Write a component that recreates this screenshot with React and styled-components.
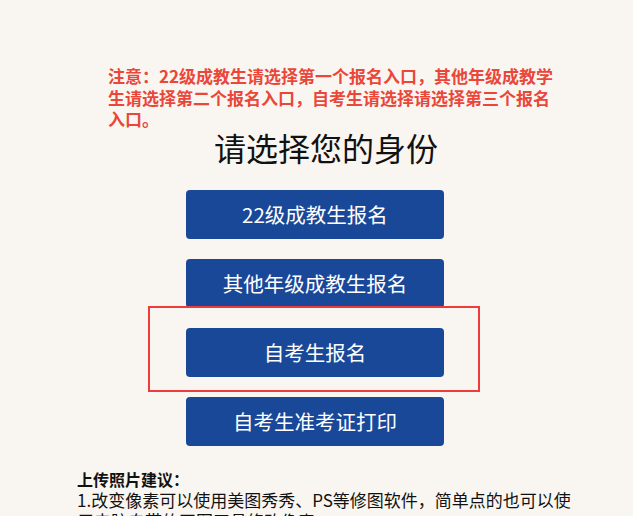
import React from "react";
import styled, { createGlobalStyle } from "styled-components";

const GlobalStyle = createGlobalStyle`
  html, body {
    margin: 0;
    padding: 0;
    background: #f9f6f1;
  }
  body {
    font-family: "Noto Sans CJK SC", "Noto Sans", sans-serif;
    color: #111;
  }
`;

const Page = styled.div`
  display: flex;
  flex-direction: column;
  align-items: flex-start;
  padding-top: 65px;
  padding-bottom: 40px;
`;

const Notice = styled.p`
  margin: 0 0 0 108px;
  width: 450px;
  font-size: 17px;
  line-height: 21.5px;
  font-weight: 700;
  color: #ea4639;
`;

const Title = styled.h2`
  margin: 0 0 0 214px;
  font-size: 32px;
  line-height: 34px;
  font-weight: 400;
  color: #111;
`;

const ButtonList = styled.div`
  display: flex;
  flex-direction: column;
  gap: 20px;
  margin: 26px 0 0 186px;
`;

const RoleButton = styled.button`
  position: relative;
  width: 258px;
  height: 49px;
  border: none;
  border-radius: 4px;
  background: #194899;
  color: #fff;
  font-family: "Noto Sans CJK SC", "Noto Sans", sans-serif;
  font-size: 20.5px;
  font-weight: 400;
  letter-spacing: ${(p) => p.$spacing || 0}px;
  cursor: pointer;
  padding: 0;
  ${(p) =>
    p.$highlight &&
    `
    &::after {
      content: "";
      position: absolute;
      left: -38px;
      top: -22px;
      width: 328px;
      height: 82px;
      border: 2px solid #ef3b3b;
      pointer-events: none;
    }
  `}
`;

const Tips = styled.div`
  margin: 23px 0 0 77px;
  width: 505px;
`;

const TipsHeading = styled.div`
  font-size: 16px;
  line-height: 20px;
  font-weight: 700;
  color: #111;
`;

const TipsText = styled.p`
  margin: 0;
  font-size: 17px;
  line-height: 21px;
  color: #111;
`;

export default function App() {
  return (
    <>
      <GlobalStyle />
      <Page>
        <Notice>
          注意：22级成教生请选择第一个报名入口，其他年级成教学生请选择第二个报名入口，自考生请选择请选择第三个报名入口。
        </Notice>
        <Title>请选择您的身份</Title>
        <ButtonList>
          <RoleButton>22级成教生报名</RoleButton>
          <RoleButton>其他年级成教生报名</RoleButton>
          <RoleButton $highlight>自考生报名</RoleButton>
          <RoleButton>自考生准考证打印</RoleButton>
        </ButtonList>
        <Tips>
          <TipsHeading>上传照片建议：</TipsHeading>
          <TipsText>
            1.改变像素可以使用美图秀秀、PS等修图软件，简单点的也可以使用电脑自带的画图工具修改像素。
          </TipsText>
          <TipsText>2.照片大小不超过规定尺寸，格式为jpg。</TipsText>
        </Tips>
      </Page>
    </>
  );
}
